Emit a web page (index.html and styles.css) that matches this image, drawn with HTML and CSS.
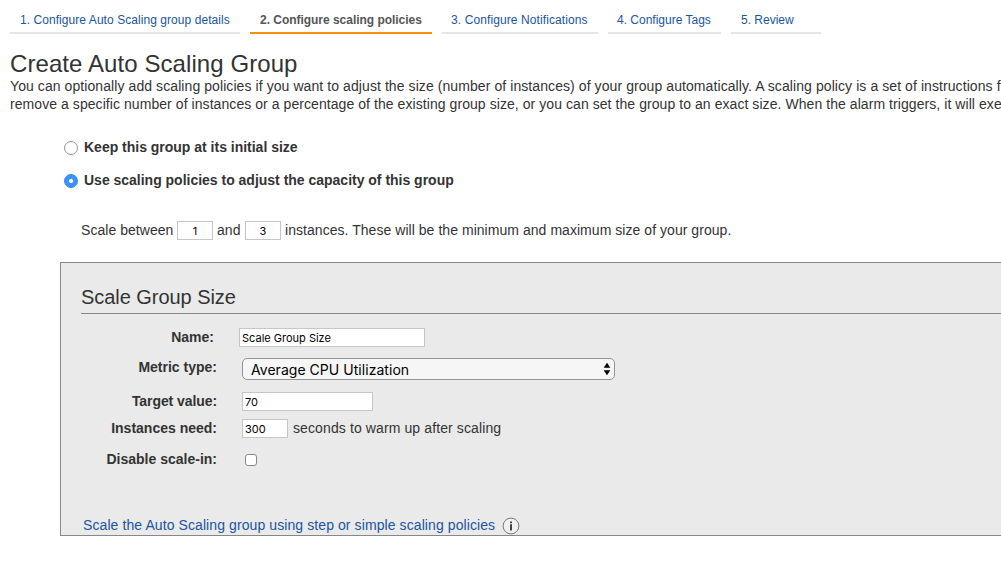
FILE: index.html
```html
<!DOCTYPE html>
<html lang="en">
<head>
<meta charset="utf-8">
<title>Create Auto Scaling Group</title>
<link rel="stylesheet" href="styles.css">
</head>
<body>
<nav class="steps">
  <a class="step step-details">1. Configure Auto Scaling group details</a>
  <a class="step step-policies active">2. Configure scaling policies</a>
  <a class="step step-notify">3. Configure Notifications</a>
  <a class="step step-tags">4. Configure Tags</a>
  <a class="step step-review">5. Review</a>
</nav>
<main>
  <h1 class="title">Create Auto Scaling Group</h1>
  <p class="intro"><span class="lead">You can optionally add scaling policies if you want to adjust the size (number of instances) of your group automatically. A scaling policy is a set of instructions f</span><br>remove a specific number of instances or a percentage of the existing group size, or you can set the group to an exact size. When the alarm triggers, it will exe</p>
  <div class="options">
    <label class="option"><input type="radio" name="mode" class="radio"><span class="keep">Keep this group at its initial size</span></label>
    <label class="option"><input type="radio" name="mode" class="radio" checked><span class="use">Use scaling policies to adjust the capacity of this group</span></label>
  </div>
  <div class="range">
    <span class="between">Scale between</span>
    <input class="field count" value="1">
    <span class="and">and</span>
    <input class="field count" value="3">
    <span class="limits">instances. These will be the minimum and maximum size of your group.</span>
  </div>
  <section class="panel">
    <h2 class="panel-title"><span>Scale Group Size</span></h2>
    <div class="row row-name"><span class="label">Name:</span><input class="field name" value="Scale Group Size"></div>
    <div class="row row-metric"><span class="label">Metric type:</span>
      <div class="select"><span>Average CPU Utilization</span><svg width="8" height="14" viewBox="0 0 8 14"><path d="M4 0.8 7.3 5.8H.7ZM4 13.2 7.3 8.2H.7Z"/></svg></div>
    </div>
    <div class="row row-target"><span class="label">Target value:</span><input class="field target" value="70"></div>
    <div class="row row-warm"><span class="label">Instances need:</span><input class="field warm" value="300"><span class="seconds">seconds to warm up after scaling</span></div>
    <div class="row row-disable"><span class="label">Disable scale-in:</span><input type="checkbox" class="check"></div>
    <div class="more"><a class="link">Scale the Auto Scaling group using step or simple scaling policies</a>
      <svg class="info" width="18" height="18" viewBox="0 0 18 18"><circle cx="9" cy="9" r="7.9" fill="#f1f1f1" stroke="#777"/><path d="M8 4.5h2v1.8H8ZM8 7.3h2v6.2H8Z" fill="#444"/></svg>
    </div>
  </section>
</main>
</body>
</html>
```
FILE: styles.css
```css
* { box-sizing: border-box; }
body {
  margin: 0;
  height: 583px;
  overflow: hidden;
  background: #fff;
  color: #333;
  font: 14px/18px "Liberation Sans", Arial, sans-serif;
}
span, a { white-space: nowrap; }
.steps { display: flex; gap: 10px; padding: 6px 0 0 10px; height: 34px; }
.step {
  height: 28px;
  padding-left: 10px;
  border-bottom: 2px solid #e6e6e6;
  color: #1a559f;
  font-size: 12px;
  line-height: 28px;
}
.step-details { width: 230px; letter-spacing: 0.06px; }
.step-policies { width: 182px; letter-spacing: -0.03px; }
.step-notify { width: 156px; padding-left: 9px; letter-spacing: 0.1px; }
.step-tags { width: 113px; padding-left: 9px; }
.step-review { width: 90px; }
.step.active { border-color: #f8910f; color: #555; font-weight: bold; }
.title { margin: 16px 0 0 10px; font-size: 24px; line-height: 28px; font-weight: normal; letter-spacing: 0.08px; }
.intro { margin: -1px 0 0 10px; white-space: nowrap; letter-spacing: 0.065px; }
.lead { letter-spacing: 0.08px; }
.options { padding: 18px 0 0 64px; }
.option { display: flex; align-items: center; height: 33px; gap: 6px; font-weight: bold; letter-spacing: -0.01px; }
.option span { padding-bottom: 2px; }
.radio {
  appearance: none;
  width: 14px;
  height: 14px;
  margin: 0;
  border: 1px solid #949494;
  border-radius: 50%;
  background: #fff;
}
.radio:checked { border-color: #2f87f7; background: radial-gradient(circle, #fff 0 1.7px, #3b92fc 2.4px); }
.range { display: flex; align-items: center; height: 20px; margin: 23px 0 0 81px; letter-spacing: 0.045px; }
.between { width: 96px; }
.and { width: 32px; padding-left: 4px; }
.limits { padding-left: 4px; }
.field {
  height: 19px;
  margin: 0;
  padding: 1px 0 0 2px;
  border: 1px solid #c6c6c6;
  background: #fff;
  color: #000;
  font: 11px Inter, sans-serif;
}
.count { width: 36px; padding-left: 0; text-align: center; }
.panel {
  height: 274px;
  margin: 22px 0 0 60px;
  padding-left: 20px;
  border: 1px solid #878787;
  border-right: 0;
  background: #eaeaea;
}
.panel-title { height: 51px; margin: 0 0 9px; padding-top: 22px; border-bottom: 1px solid #878787; font-size: 20px; line-height: 24px; font-weight: normal; letter-spacing: -0.05px; }
.row { display: flex; align-items: center; }
.label { width: 136px; margin-right: 25px; text-align: right; font-weight: bold; }
.row-name { height: 28px; }
.row-name .label { width: 133px; }
.row-metric { height: 34px; }
.row-metric .label { padding-bottom: 3px; }
.row-target { height: 32px; }
.row-target .label { letter-spacing: -0.08px; }
.row-warm { height: 22px; }
.row-disable { height: 40px; }
.name { width: 186px; }
.target { width: 131px; }
.warm { width: 46px; }
.seconds { margin-left: 5px; letter-spacing: 0.11px; }
.select {
  display: flex;
  align-items: center;
  justify-content: space-between;
  width: 373px;
  height: 22px;
  margin-top: 2px;
  padding: 0 3px 0 8px;
  border: 1px solid #949494;
  border-radius: 5px;
  background: #f6f6f6;
  color: #000;
  font: 14px Inter, sans-serif;
  letter-spacing: 0.04px;
}
.check { appearance: none; width: 12px; height: 12px; margin: 2px 0 0 3px; border: 1px solid #878787; border-radius: 3px; background: #fff; }
.more { display: flex; align-items: center; gap: 6.5px; height: 18px; margin: 38px 0 0 2px; }
.link { padding-bottom: 3px; color: #1a559f; letter-spacing: 0.09px; }
```
